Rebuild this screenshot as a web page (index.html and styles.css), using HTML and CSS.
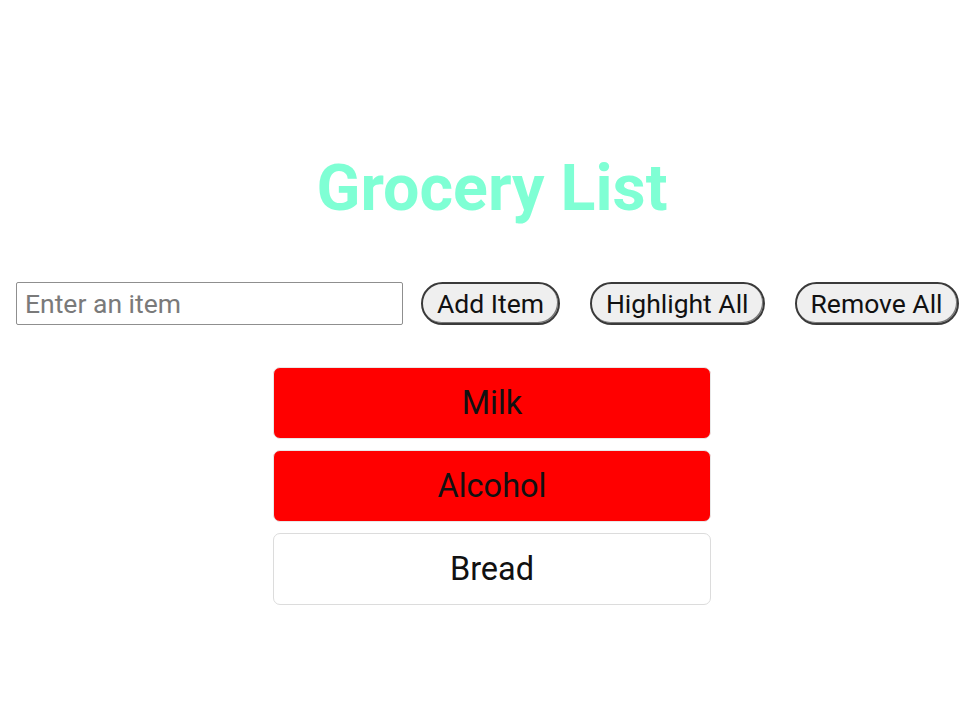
FILE: index.html
```html
<!DOCTYPE html>
<html>
<head>
<meta charset="utf-8">
<link rel="stylesheet" href="styles.css">
</head>
<body>
<main class="page">
  <h1 class="title">Grocery List</h1>
  <div class="toolbar">
    <input class="item-input" type="text" placeholder="Enter an item">
    <button class="btn">Add Item</button>
    <button class="btn">Highlight All</button>
    <button class="btn">Remove All</button>
  </div>
  <ul class="list">
    <li class="item item-hl">Milk</li>
    <li class="item item-hl">Alcohol</li>
    <li class="item">Bread</li>
  </ul>
</main>
</body>
</html>
```
FILE: styles.css
```css
html, body {
  margin: 0;
  padding: 0;
  background: #fff;
  font-family: Roboto, "Liberation Sans", sans-serif;
}
.page {
  width: 960px;
  height: 720px;
  overflow: hidden;
  display: flex;
  flex-direction: column;
}
.title {
  margin: 150px 0 0 24px;
  text-align: center;
  font-size: 64.5px;
  font-weight: 700;
  line-height: 76px;
  color: #7fffd4;
}
.toolbar {
  margin-top: 56px;
  display: flex;
  align-items: center;
  padding-left: 16px;
}
.item-input {
  flex: 0 0 387px;
  width: 387px;
  height: 43px;
  box-sizing: border-box;
  border: 1px solid #8f8f8f;
  border-radius: 2px;
  padding: 0 8px;
  font-family: Roboto, sans-serif;
  font-size: 26.5px;
  color: #000;
  margin-right: 18px;
}
.item-input::placeholder {
  color: #7a7a7a;
}
.btn {
  flex-shrink: 0;
  height: 43px;
  box-sizing: border-box;
  border: 2px solid #3a3a3a;
  border-radius: 22px;
  background: #efefef;
  font-family: Roboto, sans-serif;
  font-size: 26.5px;
  color: #111;
  padding: 0 14px;
  margin-right: 30px;
  box-shadow: inset -1px -1px 0 #777;
}
.list {
  list-style: none;
  margin: 42px 0 0 24px;
  padding: 0;
  display: flex;
  flex-direction: column;
  align-items: center;
  gap: 11px;
}
.item {
  width: 438px;
  height: 72px;
  box-sizing: border-box;
  border: 1px solid #dcdcdc;
  border-radius: 7px;
  display: flex;
  align-items: center;
  justify-content: center;
  font-size: 32.5px;
  color: #111;
  background: #fff;
}
.item-hl {
  background: #ff0000;
  border-color: #e8e8e8;
}
```
